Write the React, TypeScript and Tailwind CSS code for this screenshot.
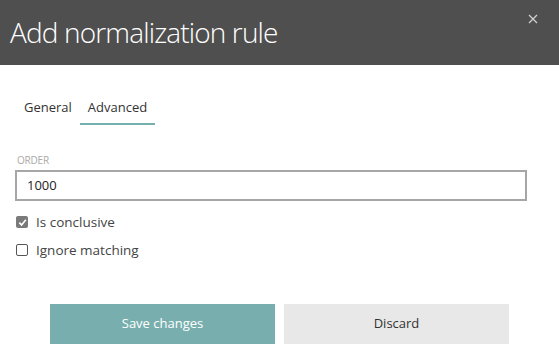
import React from "react";

export default function App() {
  return (
    <div className="w-[559px] h-[356px] bg-white relative" style={{ fontFamily: '"Open Sans", "Noto Sans", sans-serif' }}>
      <div className="h-[65px] bg-[#4f4f4f] flex items-center pl-[10px] relative">
        <h1 className="text-[28px] font-light text-white leading-none tracking-[-0.85px] -mt-[2px]">Add normalization rule</h1>
        <button className="absolute right-[20px] top-[13px] w-[12px] h-[12px] flex items-center justify-center">
          <svg width="10" height="10" viewBox="0 0 10 10" stroke="#d0d0d0" strokeWidth="1.3">
            <path d="M1 1L9 9M9 1L1 9" />
          </svg>
        </button>
      </div>
      <div className="px-[15px]">
        <div className="flex pt-[33px] pl-[9px] text-[13px] text-[#333]">
          <div className="pr-[8px] pb-[8px] leading-[18px]">General</div>
          <div className="px-[8px] pb-[7px] leading-[18px] border-b-2 border-[#76b0ae]">Advanced</div>
        </div>
        <div className="mt-[29px] text-[10px] uppercase text-[#aaaaaa] leading-[12px] pl-[2px] tracking-[-0.2px]">Order</div>
        <div className="mt-[4px] h-[31px] w-[512px] border-2 border-[#a6a6a6] flex items-center pl-[10px] text-[13px] text-[#222]">1000</div>
        <label className="flex items-center mt-[12px] h-[18px] text-[13.5px] text-[#444]">
          <span className="w-[12px] h-[12px] ml-[1px] rounded-[2px] bg-[#7a7a7a] flex items-center justify-center">
            <svg width="9" height="9" viewBox="0 0 10 10" fill="none" stroke="white" strokeWidth="1.8">
              <path d="M1.5 5.2L4 7.7L8.7 2" />
            </svg>
          </span>
          <span className="ml-[8px]">Is conclusive</span>
        </label>
        <label className="flex items-center mt-[10px] h-[18px] text-[13.5px] text-[#444]">
          <span className="w-[12px] h-[12px] ml-[1px] rounded-[2px] border border-[#555] bg-white" />
          <span className="ml-[8px]">Ignore matching</span>
        </label>
      </div>
      <div className="flex justify-center gap-[9px] mt-[45px]">
        <button className="w-[225px] h-[40px] bg-[#78afae] text-white text-[13px]">Save changes</button>
        <button className="w-[225px] h-[40px] bg-[#e8e8e8] text-[#333] text-[13px]">Discard</button>
      </div>
    </div>
  );
}
